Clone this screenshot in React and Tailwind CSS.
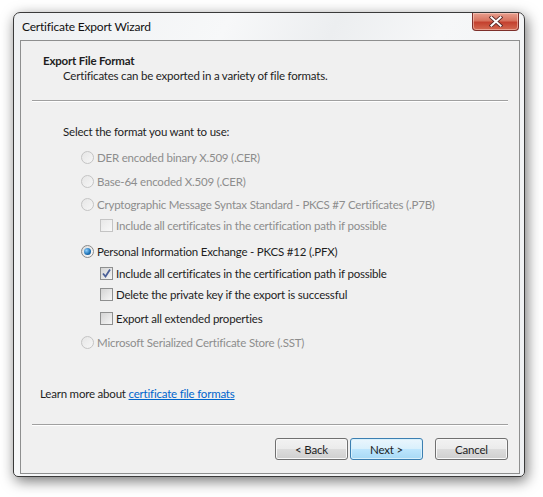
import React from "react";

const font = { fontFamily: 'Lato, "Noto Sans", sans-serif', letterSpacing: "-0.2px" };

function Radio({ checked, disabled }) {
  return (
    <span
      className={
        "inline-block w-[13px] h-[13px] rounded-full border shrink-0 relative " +
        (disabled
          ? "border-[#c4c4c4] bg-gradient-to-br from-[#e6e6e6] to-[#f6f6f6]"
          : "border-[#8a8a8a] bg-gradient-to-br from-[#dcdcdc] to-[#fbfbfb]")
      }
    >
      {checked && (
        <span className="absolute left-[2px] top-[2px] w-[7px] h-[7px] rounded-full bg-[radial-gradient(circle_at_35%_35%,#8fd0ff,#1a6fb3_60%,#0b3f78)]" />
      )}
    </span>
  );
}

function Check({ checked, disabled }) {
  return (
    <span
      className={
        "inline-block w-[13px] h-[13px] border shrink-0 relative " +
        (disabled
          ? "border-[#c4c4c4] bg-gradient-to-br from-[#e8e8e8] to-[#f8f8f8]"
          : "border-[#8e8f8f] bg-gradient-to-br from-[#d4d4d4] to-[#f6f6f6]")
      }
    >
      {checked && (
        <svg viewBox="0 0 11 11" className="absolute left-0 top-0 w-[11px] h-[11px]">
          <path d="M2 5.5 L4.5 8.5 L9 1.5" fill="none" stroke="#4a5f97" strokeWidth="1.8" />
        </svg>
      )}
    </span>
  );
}

function RadioRow({ label, checked, disabled, h }) {
  return (
    <div className={"flex items-center pl-[60px] " + h}>
      <Radio checked={checked} disabled={disabled} />
      <span className={"ml-[3px] " + (disabled ? "text-[#8d8d8d]" : "text-[#1e1e1e]")}>{label}</span>
    </div>
  );
}

function CheckRow({ label, checked, disabled, h }) {
  return (
    <div className={"flex items-center pl-[79px] " + h}>
      <Check checked={checked} disabled={disabled} />
      <span className={"ml-[3px] " + (disabled ? "text-[#8d8d8d]" : "text-[#1e1e1e]")}>{label}</span>
    </div>
  );
}

function Button({ children, def }) {
  return (
    <div
      className={
        "w-[73px] h-[22px] rounded-[3px] border flex items-center justify-center text-[#1e1e1e] " +
        (def
          ? "border-[#3c7fb1] bg-[linear-gradient(#eaf6fd_0%,#d9f0fc_50%,#bee6fd_50%,#a7d9f5_100%)] shadow-[inset_0_0_0_1px_#d8f0fb]"
          : "border-[#707070] bg-[linear-gradient(#f2f2f2_0%,#ebebeb_50%,#dddddd_50%,#cfcfcf_100%)] shadow-[inset_0_0_0_1px_#f8f8f8]")
      }
    >
      {children}
    </div>
  );
}

export default function App() {
  return (
    <div className="w-[543px] h-[497px] bg-white pt-[12px] pl-[13px] text-[11.5px] leading-[15px]" style={font}>
      <div className="w-[512px] h-[465px] border border-[#3a3a3a] rounded-t-[7px] rounded-b-[5px] shadow-[2px_4px_14px_rgba(0,0,0,0.55)] bg-[linear-gradient(115deg,#eef0f2_0%,#f7f8f9_30%,#eceef0_45%,#f6f7f8_60%,#eef0f2_100%)] flex flex-col relative">
        <div className="h-[27px] flex items-center pl-[8px] text-[#111] text-[12px]">Certificate Export Wizard</div>
        <div className="absolute top-[0px] right-[5px] w-[47px] h-[18px] rounded-b-[4px] border border-t-0 border-[#7d2f2a] bg-[linear-gradient(#e8a08f_0%,#d7735f_45%,#c4412f_55%,#d36a52_100%)] shadow-[inset_0_0_0_1px_rgba(255,220,210,0.5)] flex items-center justify-center">
          <svg viewBox="0 0 14 12" className="w-[14px] h-[11px]">
            <path d="M2 1.5 L12 10.5 M12 1.5 L2 10.5" stroke="#5a2a28" strokeWidth="4" strokeLinecap="square" />
            <path d="M2 1.5 L12 10.5 M12 1.5 L2 10.5" stroke="#ffffff" strokeWidth="2.2" strokeLinecap="square" />
          </svg>
        </div>
        <div className="ml-[6px] mr-[4px] mb-[2px] flex-1 border border-[#8e8f8f] bg-[#f0f0f0] flex flex-col">
          <div className="pt-[12px] pl-[22px] font-bold text-[#1e1e1e]">Export File Format</div>
          <div className="pl-[42px] text-[#1e1e1e]">Certificates can be exported in a variety of file formats.</div>
          <div className="mt-[17px] mx-[11px] border-t border-b border-t-[#a0a0a0] border-b-white" />
          <div className="mt-[22px] pl-[42px] text-[#1e1e1e]">Select the format you want to use:</div>
          <div className="mt-[6px] flex flex-col">
            <RadioRow h="h-[24px]" disabled label="DER encoded binary X.509 (.CER)" />
            <RadioRow h="h-[24px]" disabled label="Base-64 encoded X.509 (.CER)" />
            <RadioRow h="h-[22px]" disabled label="Cryptographic Message Syntax Standard - PKCS #7 Certificates (.P7B)" />
            <CheckRow h="h-[20px]" disabled label="Include all certificates in the certification path if possible" />
            <div className="h-[4px]" />
            <RadioRow h="h-[24px]" checked label="Personal Information Exchange - PKCS #12 (.PFX)" />
            <CheckRow h="h-[20px]" checked label="Include all certificates in the certification path if possible" />
            <CheckRow h="h-[23px]" label="Delete the private key if the export is successful" />
            <CheckRow h="h-[24px]" label="Export all extended properties" />
            <RadioRow h="h-[24px]" disabled label="Microsoft Serialized Certificate Store (.SST)" />
          </div>
          <div className="mt-[32px] pl-[19px] text-[#1e1e1e]">
            Learn more about <span className="text-[#0066cc] underline">certificate file formats</span>
          </div>
          <div className="mt-[23px] mx-[11px] border-t border-b border-t-[#a0a0a0] border-b-white" />
          <div className="mt-[12px] flex justify-end pr-[11px]">
            <Button>&lt; Back</Button>
            <div className="w-[2px]" />
            <Button def>Next &gt;</Button>
            <div className="w-[12px]" />
            <Button>Cancel</Button>
          </div>
        </div>
      </div>
    </div>
  );
}
